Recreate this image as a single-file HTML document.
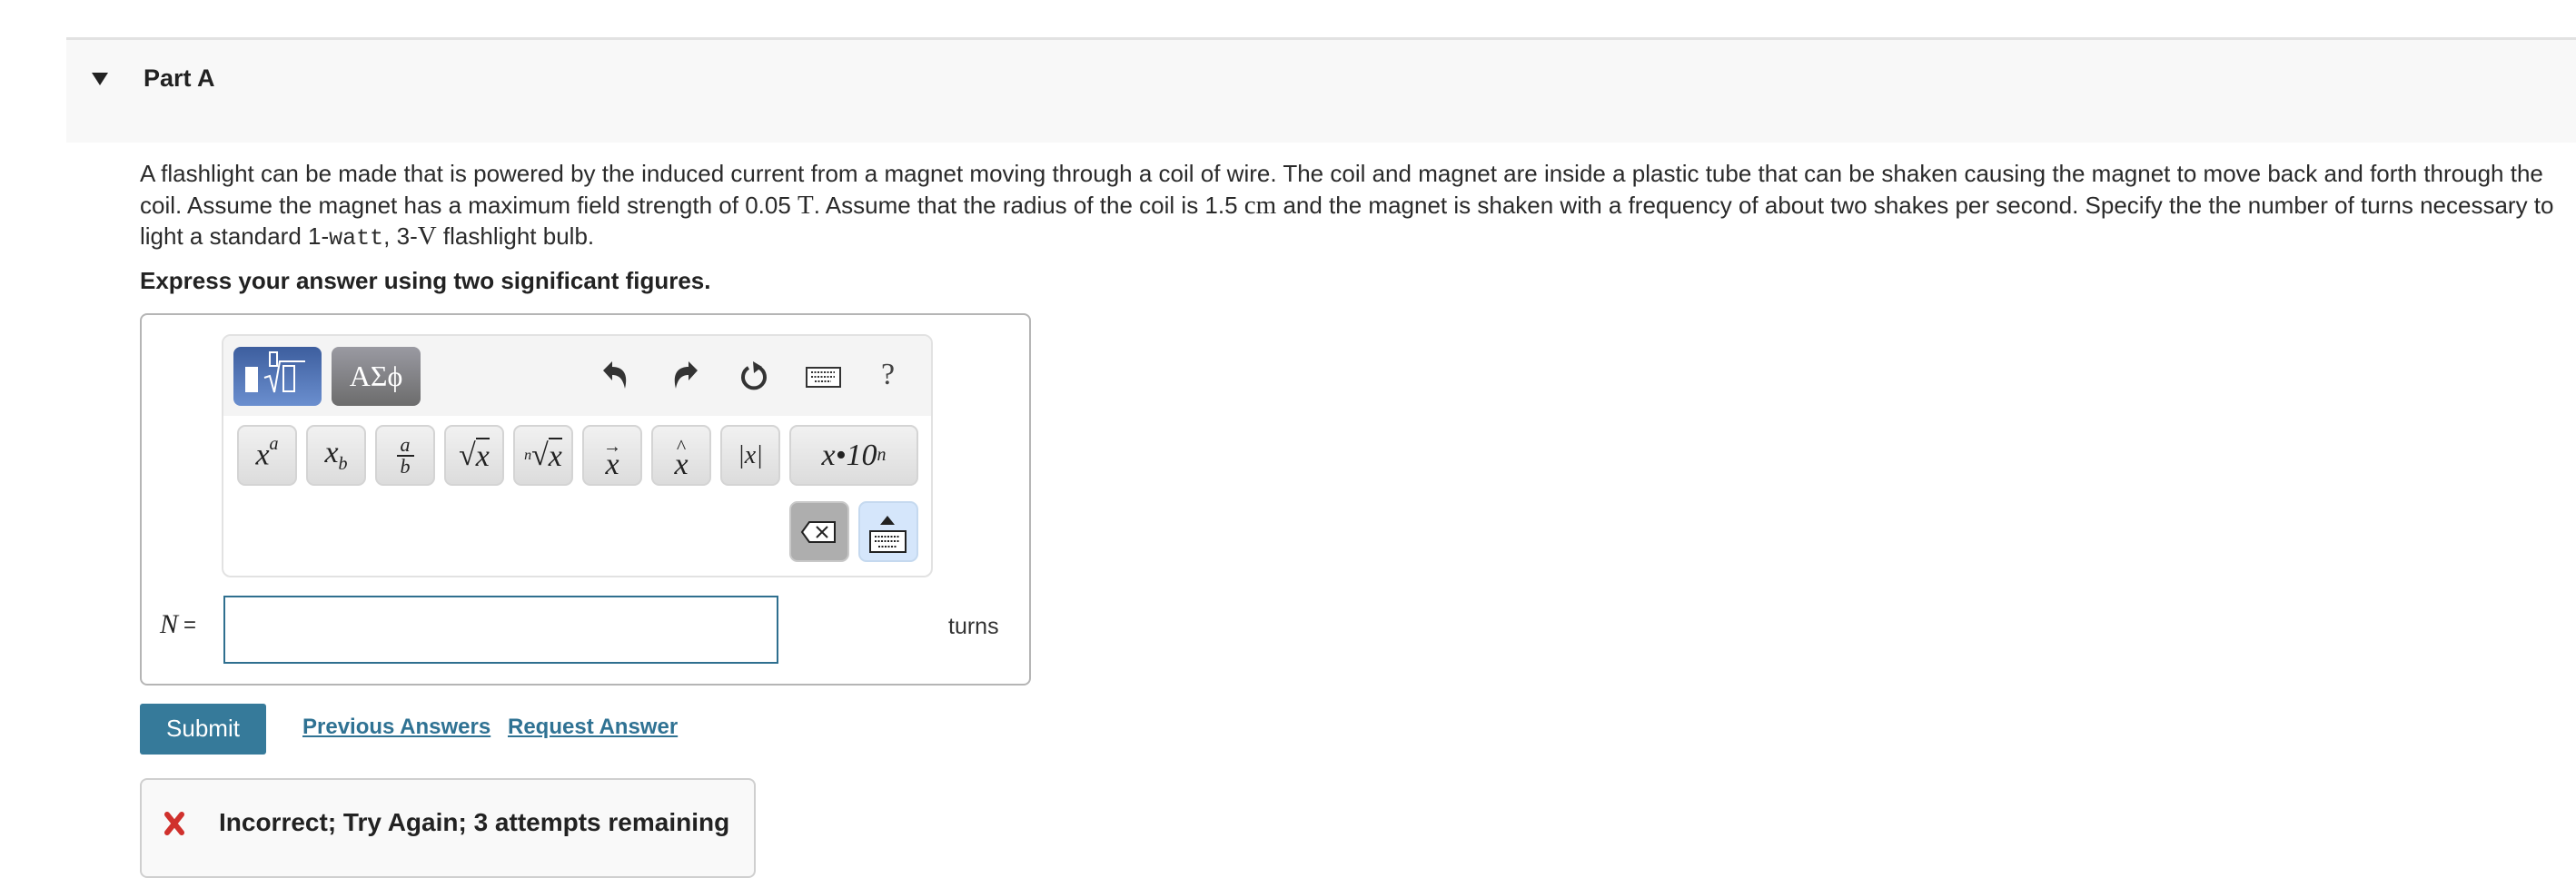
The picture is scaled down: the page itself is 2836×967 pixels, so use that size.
<!DOCTYPE html>
<html><head><meta charset="utf-8"><style>
*{box-sizing:border-box;margin:0;padding:0}
body{width:2836px;height:948px;background:#fff;position:relative;overflow:hidden;font-family:"Liberation Sans",Arial,sans-serif;color:#333}
.abs{position:absolute}
.key{position:absolute;top:468px;height:67px;width:66px;border:2px solid #d4d4d4;border-radius:9px;background:linear-gradient(#f1f1f1,#dcdcdc);font-family:"Liberation Serif",serif;font-style:italic;font-size:34px;color:#222;display:flex;align-items:center;justify-content:center}
.line{position:absolute;left:154px;white-space:nowrap;font-size:26px;color:#2a2a2a}
.m{font-family:"Liberation Serif",serif;font-size:29px}
.tt{font-family:"Liberation Mono",monospace;font-size:25px}
a{color:#2f7293;text-decoration:underline;font-weight:bold}
</style></head><body>
<div class="abs" style="left:73px;top:41px;right:0;height:3px;background:#e2e2e2"></div>
<div class="abs" style="left:73px;top:44px;right:0;height:113px;background:#f8f8f8"></div>
<div class="abs" style="left:101px;top:80px;width:0;height:0;border-left:9px solid transparent;border-right:9px solid transparent;border-top:14px solid #222"></div>
<div class="abs" style="left:158px;top:71px;font-size:27px;font-weight:bold;color:#222">Part A</div>

<div class="line" style="top:176px">A flashlight can be made that is powered by the induced current from a magnet moving through a coil of wire. The coil and magnet are inside a plastic tube that can be shaken causing the magnet to move back and forth through the</div>
<div class="line" style="top:210px">coil. Assume the magnet has a maximum field strength of 0.05 <span class="m">T</span>. Assume that the radius of the coil is 1.5 <span class="m">cm</span> and the magnet is shaken with a frequency of about two shakes per second. Specify the the number of turns necessary to</div>
<div class="line" style="top:244px">light a standard 1-<span class="tt">watt</span>, 3-<span class="m">V</span> flashlight bulb.</div>
<div class="line" style="top:294px;font-weight:bold;color:#222">Express your answer using two significant figures.</div>

<div class="abs" style="left:154px;top:345px;width:981px;height:410px;border:2px solid #b5b5b5;border-radius:8px"></div>
<div class="abs" style="left:244px;top:368px;width:783px;height:268px;border:2px solid #e2e2e2;border-radius:10px;background:#fff;overflow:hidden">
  <div style="height:88px;background:#f4f4f4"></div>
</div>
<div class="abs" style="left:257px;top:382px;width:97px;height:65px;border-radius:8px;background:linear-gradient(#3d5e9e,#6b8fcf)"></div>
<div class="abs" style="left:270px;top:404px;width:14px;height:28px;background:#fff"></div>
<svg class="abs" style="left:288px;top:386px" width="62" height="52"><rect x="9" y="2" width="8" height="15" fill="none" stroke="#fff" stroke-width="2"/><path d="M3 30 L9 28 L14 46 L20 12 L48 12" fill="none" stroke="#fff" stroke-width="2"/><rect x="24" y="17" width="12" height="28" fill="none" stroke="#fff" stroke-width="2"/></svg>
<div class="abs" style="left:365px;top:382px;width:98px;height:65px;border-radius:8px;background:linear-gradient(#9a9aa2,#6c6c6c);color:#fff;font-family:'Liberation Serif',serif;font-size:32px;text-align:center;line-height:65px">ΑΣϕ</div>
<svg class="abs" style="left:660px;top:396px" width="36" height="36"><path d="M4 12 L14 2 L14 8 C26 8 32 16 28 32 C26 22 22 17 14 17 L14 23 Z" fill="#333"/></svg>
<svg class="abs" style="left:736px;top:396px" width="36" height="36"><path d="M32 12 L22 2 L22 8 C10 8 4 16 8 32 C10 22 14 17 22 17 L22 23 Z" fill="#333"/></svg>
<svg class="abs" style="left:812px;top:395px" width="36" height="38"><path d="M12 10 A12 12 0 1 0 24 10" fill="none" stroke="#333" stroke-width="4"/><path d="M17 3 L27 9 L18 16 Z" fill="#333"/></svg>
<svg class="abs" style="left:887px;top:404px" width="40" height="24"><rect x="1" y="1" width="37" height="21" fill="#fff" stroke="#333" stroke-width="2"/><path d="M6 6h26M6 11h26M10 16h18" stroke="#333" stroke-width="2" stroke-dasharray="2 1.5"/></svg>
<div class="abs" style="left:970px;top:394px;font-family:'Liberation Serif',serif;font-size:34px;color:#444">?</div>

<div class="key" style="left:261px"><span>x<sup style="font-size:20px;position:relative;top:-4px">a</sup></span></div>
<div class="key" style="left:337px"><span>x<sub style="font-size:20px">b</sub></span></div>
<div class="key" style="left:413px;flex-direction:column;font-size:22px;line-height:22px"><span style="border-bottom:2px solid #222;padding:0 4px">a</span><span>b</span></div>
<div class="key" style="left:489px">√<span style="border-top:2px solid #222">x</span></div>
<div class="key" style="left:565px"><sup style="font-size:16px">n</sup>√<span style="border-top:2px solid #222">x</span></div>
<div class="key" style="left:641px;flex-direction:column;line-height:20px"><span style="font-size:20px;font-style:normal">→</span><span>x</span></div>
<div class="key" style="left:717px;flex-direction:column;line-height:20px"><span style="font-size:22px;font-style:normal">^</span><span>x</span></div>
<div class="key" style="left:793px;font-size:28px">|x|</div>
<div class="key" style="left:869px;width:142px">x•10<sup style="font-size:20px">n</sup></div>
<div class="abs" style="left:869px;top:552px;width:66px;height:67px;border:2px solid #c8c8c8;border-radius:9px;background:#aeaeae"></div>
<svg class="abs" style="left:881px;top:573px" width="42" height="26"><path d="M2 13 L10 2 L38 2 L38 24 L10 24 Z" fill="#fff" stroke="#222" stroke-width="2"/><path d="M18 7 L30 19 M30 7 L18 19" stroke="#222" stroke-width="2"/></svg>
<div class="abs" style="left:945px;top:552px;width:66px;height:67px;border:2px solid #c5d9ef;border-radius:9px;background:#d5e6fb"></div>
<div class="abs" style="left:969px;top:568px;width:0;height:0;border-left:8px solid transparent;border-right:8px solid transparent;border-bottom:10px solid #222"></div>
<svg class="abs" style="left:957px;top:584px" width="42" height="26"><rect x="1" y="1" width="39" height="23" fill="#fff" stroke="#222" stroke-width="2"/><path d="M6 7h28M6 12h28M10 18h20" stroke="#222" stroke-width="2" stroke-dasharray="2 1.5"/></svg>

<div class="abs" style="left:176px;top:671px;font-family:'Liberation Serif',serif;font-style:italic;font-size:30px;color:#222">N</div>
<div class="abs" style="left:202px;top:675px;font-size:24px">=</div>
<div class="abs" style="left:246px;top:656px;width:611px;height:75px;border:2px solid #2f6f8f"></div>
<div class="abs" style="left:1044px;top:676px;font-size:25px">turns</div>

<div class="abs" style="left:154px;top:775px;width:139px;height:56px;background:#367a9a;border-radius:3px;color:#fff;font-size:26px;text-align:center;line-height:54px">Submit</div>
<div class="abs" style="left:333px;top:787px;font-size:24px"><a>Previous Answers</a></div>
<div class="abs" style="left:559px;top:787px;font-size:24px"><a>Request Answer</a></div>

<div class="abs" style="left:154px;top:857px;width:678px;height:110px;border:2px solid #cfcfcf;border-radius:8px;background:#f9f9f9"></div>
<svg class="abs" style="left:180px;top:893px" width="24" height="28"><path d="M4 4 L20 24 M20 4 L4 24" stroke="#d0312d" stroke-width="6" stroke-linecap="round"/></svg>
<div class="abs" style="left:241px;top:890px;font-size:28px;font-weight:bold;color:#222">Incorrect; Try Again; 3 attempts remaining</div>
</body></html>
